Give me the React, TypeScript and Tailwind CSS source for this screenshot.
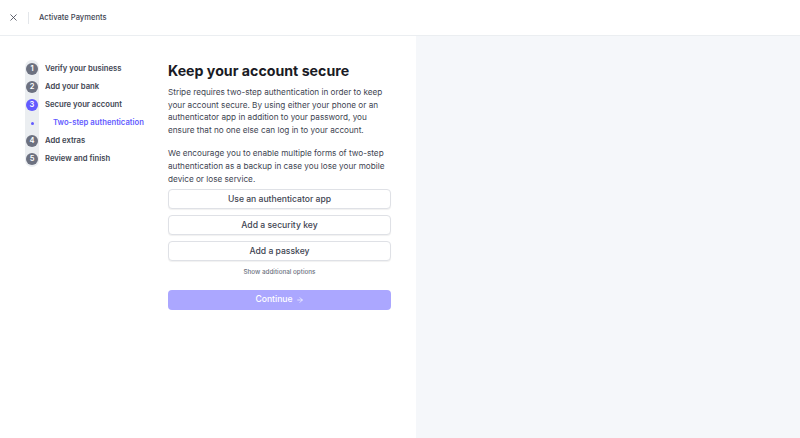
import { ArrowRight, X } from 'lucide-react'

const steps = [
  { n: 1, label: 'Verify your business' },
  { n: 2, label: 'Add your bank' },
  { n: 3, label: 'Secure your account', active: true },
  { n: 0, label: 'Two-step authentication', sub: true },
  { n: 4, label: 'Add extras' },
  { n: 5, label: 'Review and finish' },
]

const options = ['Use an authenticator app', 'Add a security key', 'Add a passkey']

export default function App() {
  return (
    <div
      className="flex h-[438px] w-[800px] flex-col bg-white text-[#30313d]"
      style={{ fontFamily: 'Inter, "Noto Sans", sans-serif' }}
    >
      <header className="flex h-[36px] shrink-0 items-center border-b border-[#ebeef1] pl-[8px]">
        <X className="h-[11px] w-[11px] text-[#414552]" strokeWidth={1.8} />
        <div className="ml-[9px] h-[12px] w-px bg-[#e3e6ea]" />
        <span className="ml-[10px] text-[7.6px] font-medium text-[#414552]">Activate Payments</span>
      </header>
      <div className="flex flex-1">
        <div className="flex w-[416px] shrink-0 pt-[23px]">
          <nav className="relative ml-[25px] mt-[1px] w-[120px] shrink-0">
            <div className="absolute left-0 top-0 h-[107px] w-[14px] rounded-full bg-[#ebeef1]" />
            <ul className="relative flex flex-col">
              {steps.map((s) => (
                <li key={s.label} className="flex h-[18px] items-center whitespace-nowrap">
                  <div className="flex w-[14px] justify-center">
                    {s.sub ? (
                      <span className="h-[3px] w-[3px] rounded-full bg-[#635bff]" />
                    ) : (
                      <span
                        className={
                          'flex h-[12px] w-[12px] items-center justify-center rounded-full text-[7.5px] font-semibold text-white ' +
                          (s.active ? 'bg-[#635bff]' : 'bg-[#6c7180]')
                        }
                      >
                        {s.n}
                      </span>
                    )}
                  </div>
                  <span
                    className={
                      s.sub
                        ? 'ml-[14px] text-[7.7px] font-semibold text-[#635bff]'
                        : 'ml-[6px] text-[7.7px] font-semibold text-[#414552]'
                    }
                  >
                    {s.label}
                  </span>
                </li>
              ))}
            </ul>
          </nav>
          <main className="ml-[23px] flex w-[223px] flex-col">
            <h1 className="mt-[2px] text-[14.2px] leading-[20px] font-bold text-[#1a1b25]">
              Keep your account secure
            </h1>
            <p className="mt-[5px] text-[8.2px] leading-[12.6px] text-[#414552]">
              Stripe requires two-step authentication in order to keep your account secure. By using either your
              phone or an authenticator app in addition to your password, you ensure that no one else can log in to
              your account.
            </p>
            <p className="mt-[11px] text-[8.2px] leading-[12.6px] text-[#414552]">
              We encourage you to enable multiple forms of two-step authentication as a backup in case you lose your
              mobile device or lose service.
            </p>
            <div className="mt-[4px] flex flex-col gap-[6px]">
              {options.map((o) => (
                <button
                  key={o}
                  className="flex h-[20px] items-center justify-center rounded-[4px] border border-[#dfe1e6] bg-white text-[8.6px] font-medium text-[#414552] shadow-[0_1px_1px_rgba(0,0,0,0.06)]"
                >
                  {o}
                </button>
              ))}
            </div>
            <div className="mt-[7px] text-center text-[6.3px] font-medium text-[#6c7180]">Show additional options</div>
            <button className="mt-[12px] flex h-[20px] items-center justify-center gap-[3px] rounded-[4px] bg-[#aba7ff] text-[8.6px] font-medium text-white">
              Continue
              <ArrowRight className="h-[8px] w-[8px]" strokeWidth={2} />
            </button>
          </main>
        </div>
        <div className="flex-1 bg-[#f5f7fa]" />
      </div>
    </div>
  )
}
